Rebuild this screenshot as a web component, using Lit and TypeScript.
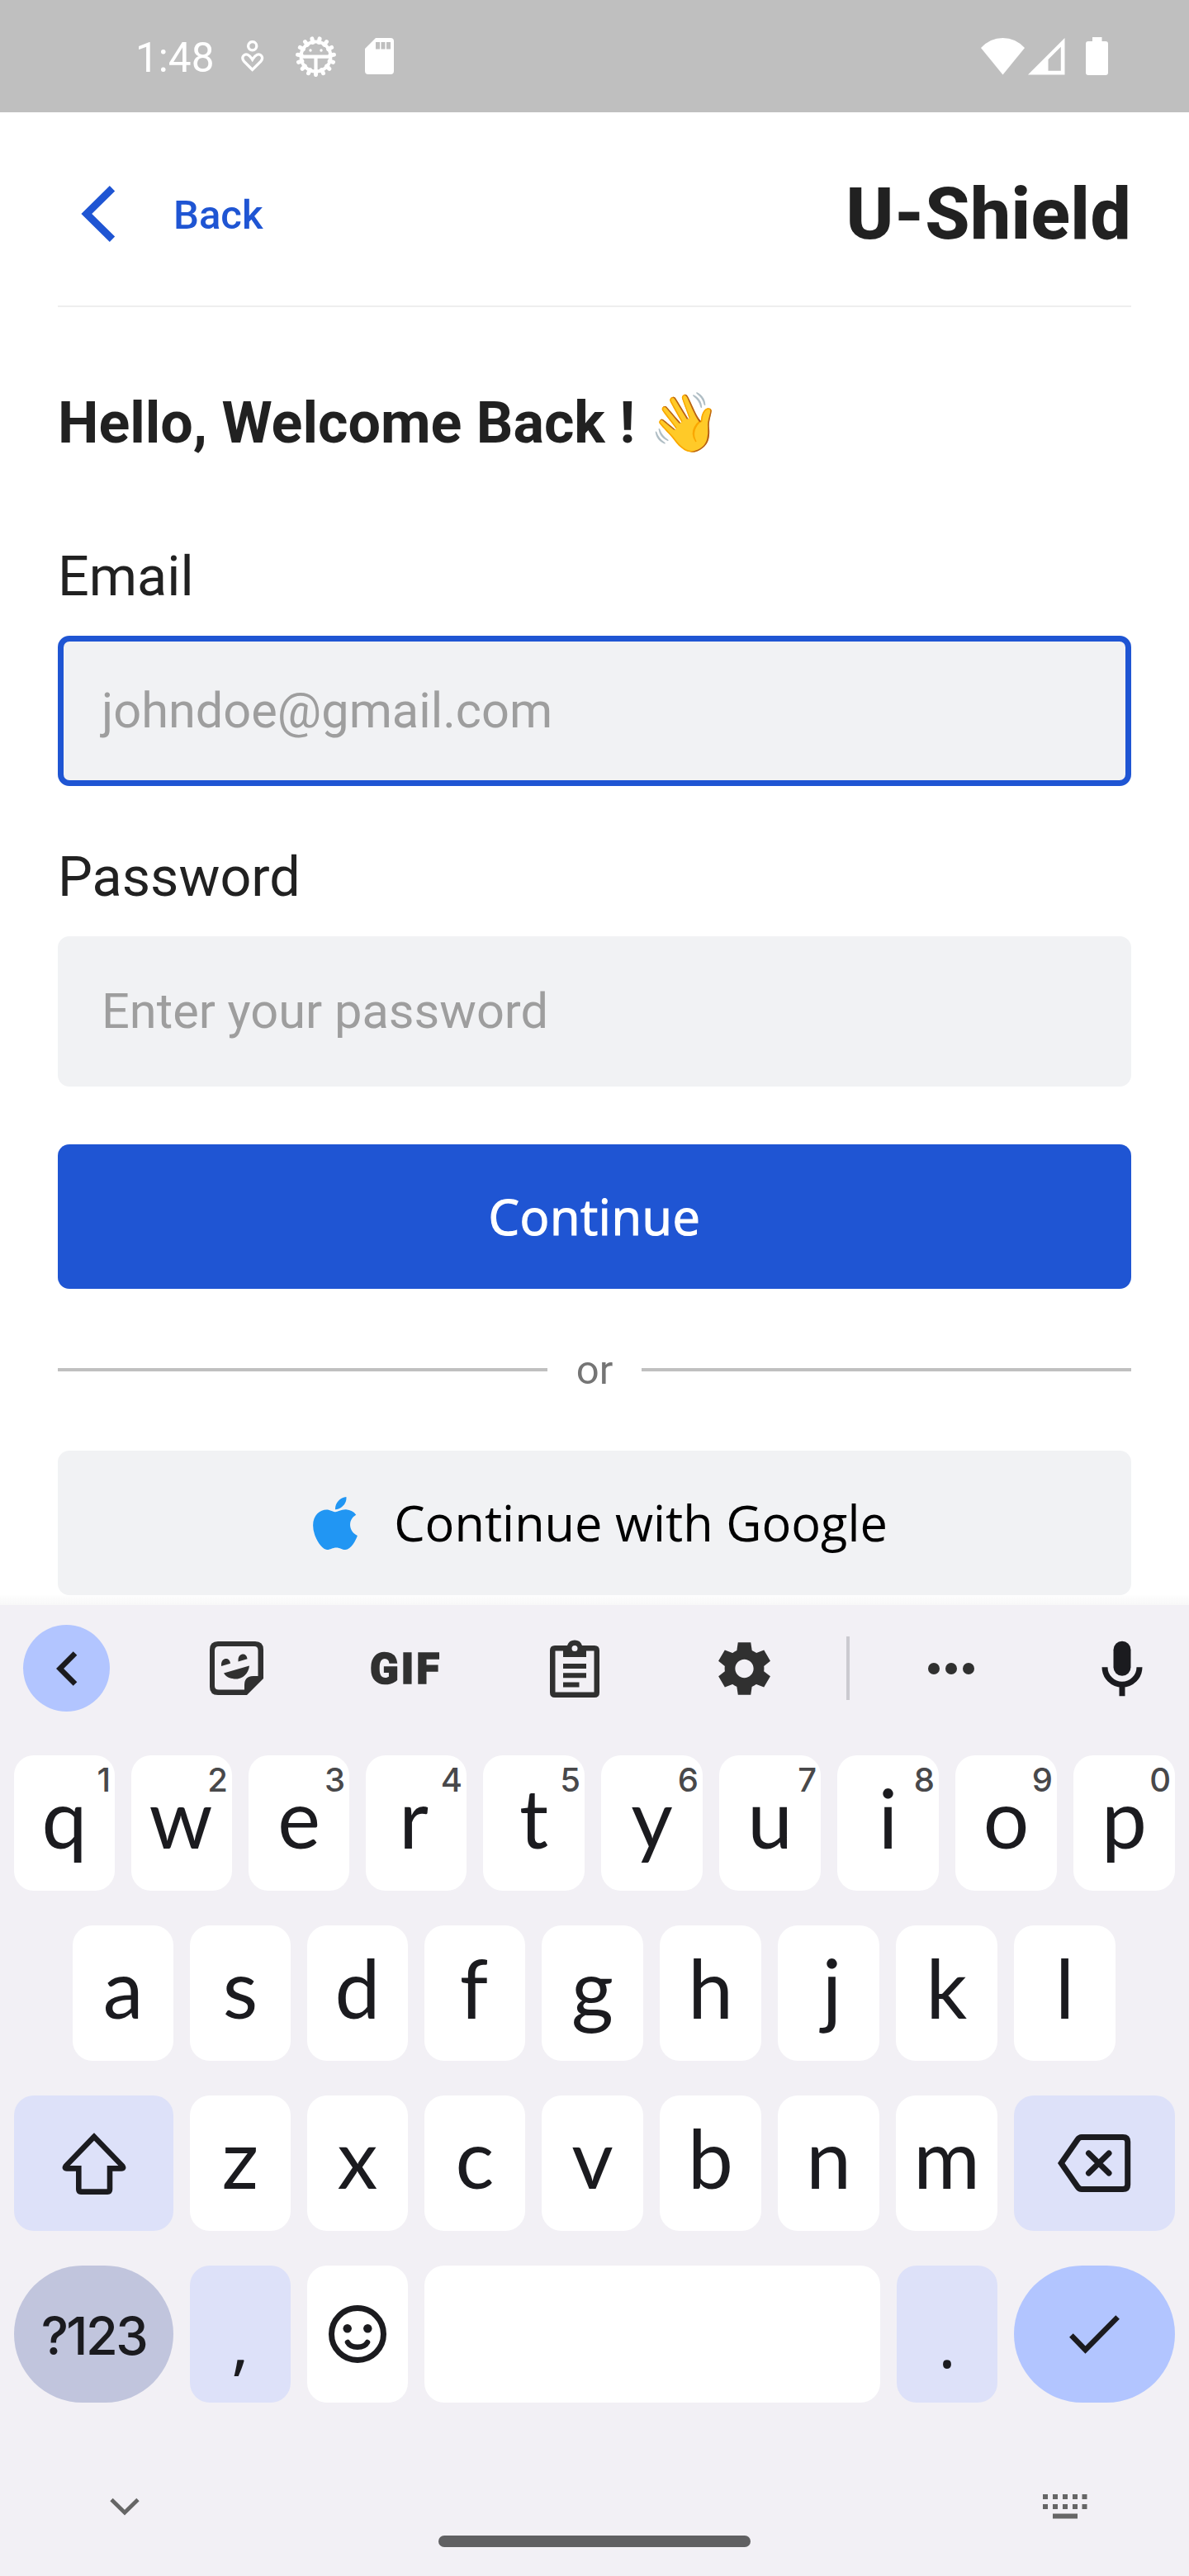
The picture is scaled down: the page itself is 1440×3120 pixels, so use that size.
import { LitElement, html, css, svg, nothing } from "lit";
import { customElement, property } from "lit/decorators.js";

const GEAR_TEETH = Array.from({ length: 15 }, (_, i) => (i * 360) / 15);

const NUDGE: Record<string, number> = { r: -3, f: -1, j: 4, w: -1 };

@customElement("status-bar")
class StatusBar extends LitElement {
  static styles = css`
    :host { display: block; }
    .bar { box-sizing: border-box; height: 136px; background: #bfbfbf; display: flex; align-items: center; padding: 0 98px 0 164px; color: #fff; }
    .time { font: 400 49.5px/60px Roboto, sans-serif; width: 128px; padding-top: 4px; }
    svg { display: block; flex: none; }
    .bug { margin-left: 38px; }
    .card { margin-left: 35px; }
    .wifi { margin-left: auto; }
    .signal { margin-left: 4px; }
    .battery { margin-left: 25px; }
  `;
  render() {
    return html`<div class="bar">
      <span class="time">1:48</span>
      <svg width="28" height="38" viewBox="0 0 28 38" fill="none" stroke="#fff" stroke-width="3.3">
        <circle cx="13.7" cy="6.7" r="5.1" />
        <path d="M13.7 35.5L3.6 25.3C-.6 20.5 3.6 15.8 8 17.3C10.8 18.3 12.2 21 13.7 23.2C15.2 21 16.6 18.3 19.4 17.3C23.8 15.8 28 20.5 23.8 25.3Z" />
      </svg>
      <svg class="bug" width="49" height="49" viewBox="0 0 49 49">
        ${GEAR_TEETH.map((a) => svg`<line x1="24.5" y1="42" x2="24.5" y2="46.6" stroke="#fff" stroke-width="5" stroke-linecap="round" transform="rotate(${a} 24.5 24.5)" />`)}
        <circle cx="24.5" cy="24.5" r="18" fill="none" stroke="#fff" stroke-width="4" />
        <path d="M7 24.7H42M24.5 25V42" stroke="#fff" stroke-width="4.2" />
        <circle cx="18" cy="17" r="1.7" fill="#fff" /><circle cx="31" cy="17" r="1.7" fill="#fff" />
      </svg>
      <svg class="card" width="35" height="44" viewBox="0 0 35 44">
        <path d="M13 0H31Q35 0 35 4V40Q35 44 31 44H4Q0 44 0 40V13Z" fill="#fff" />
        <path d="M13 5h5v8.5h-5zM19.5 5h5v8.5h-5zM26 5h5v8.5h-5z" fill="#bfbfbf" />
      </svg>
      <svg class="wifi" width="53" height="45" viewBox="0 0 53 45" fill="#fff"><path d="M26.5 44.5L0 12Q11 0 26.5 0Q42 0 53 12Z" /></svg>
      <svg class="signal" width="45" height="45" viewBox="0 0 45 45" fill="#fff" fill-rule="evenodd"><path d="M0 44.5L44.5 0V44.5ZM24.5 26V39.8H39.8V10.8Z" /></svg>
      <svg class="battery" width="27" height="46" viewBox="0 0 27 46" fill="#fff"><path d="M8 0H19.5V5H24Q27 5 27 8V43Q27 46 24 46H3Q0 46 0 43V8Q0 5 3 5H8Z" /></svg>
    </div>`;
  }
}

@customElement("login-form")
class LoginForm extends LitElement {
  static styles = css`
    :host { display: block; font-family: Roboto, sans-serif; color: #212121; }
    .page { box-sizing: border-box; height: 1808px; padding: 0 70px; background: linear-gradient(#fff 0 1796px, #fdfdfd 1797px, #f8f8f8 1808px); }
    svg { display: block; flex: none; }
    .header { box-sizing: border-box; height: 236px; border-bottom: 2px solid #eee; padding: 12px 0 0 28px; display: flex; align-items: center; }
    .back { font-size: 49px; font-weight: 500; line-height: 60px; color: #1f55d3; margin-left: 70px; padding-top: 3px; }
    .brand { margin-left: auto; font-size: 87.5px; font-weight: 800; line-height: 100px; letter-spacing: 0.4px; }
    .hello { margin: 100px 0 0; font-size: 70px; font-weight: 700; line-height: 80px; height: 80px; white-space: pre; }
    .label { font-size: 66.5px; line-height: 80px; margin-top: 106px; }
    .field + .label { margin-top: 70px; }
    .field { box-sizing: border-box; height: 182px; margin-top: 32px; border: 7px solid #f1f2f4; border-radius: 14px; background: #f1f2f4; color: #9e9e9e; font-size: 59.5px; line-height: 168px; padding-left: 46px; }
    .field.focused { border-color: #1f55d3; }
    .button { box-sizing: border-box; height: 175px; margin-top: 70px; border-radius: 14px; background: #1f55d3; color: #fff; font: 400 59.5px/172px "Open Sans", sans-serif; display: flex; justify-content: center; align-items: center; }
    .button span { padding-bottom: 2px; }
    .button .strong { letter-spacing: 0.6px; -webkit-text-stroke: 1.2px currentColor; }
    .or { display: flex; align-items: center; gap: 35px; height: 60px; margin-top: 68px; color: #757575; font-size: 49px; line-height: 58px; }
    .or span { padding-top: 2px; }
    .rule { flex: 1; height: 4px; background: #c0c0c0; }
    .button.google { background: #f1f2f4; color: #000; margin-top: 68px; gap: 44px; padding-left: 14px; }
  `;
  render() {
    return html`<div class="page">
      <div class="header">
        <svg width="42" height="68" viewBox="0 0 42 68" fill="none" stroke="#1f55d3" stroke-width="9"><path d="M38 3.2L6.8 34L38 64.8" /></svg>
        <span class="back">Back</span>
        <span class="brand">U-Shield</span>
      </div>
      <h1 class="hello">Hello, Welcome Back ! 👋</h1>
      <div class="label">Email</div>
      <div class="field focused">johndoe@gmail.com</div>
      <div class="label">Password</div>
      <div class="field">Enter your password</div>
      <div class="button"><span class="strong">Continue</span></div>
      <div class="or"><div class="rule"></div><span>or</span><div class="rule"></div></div>
      <div class="button google">
        <svg width="54" height="64" viewBox="4 32 376.5 448" fill="#2196f3"><path d="M318.7 268.7c-.2-36.7 16.4-64.4 50-84.8-18.8-26.9-47.2-41.7-84.7-44.6-35.5-2.8-74.3 20.7-88.5 20.7-15 0-49.4-19.7-76.4-19.7C63.3 141.2 4 184.8 4 273.5q0 39.3 14.4 81.2c12.8 36.7 59 126.7 107.2 125.2 25.2-.6 43-17.9 75.8-17.9 31.8 0 48.3 17.9 76.4 17.9 48.6-.7 90.4-82.5 102.6-119.3-65.2-30.7-61.7-90-61.7-91.9zm-56.6-164.2c27.3-32.4 24.8-61.9 24-72.5-24.1 1.4-52 16.4-67.9 34.9-17.5 19.8-27.8 44.3-25.6 71.9 26.1 2 49.9-11.4 69.5-34.3z" /></svg>
        <span>Continue with Google</span>
      </div>
    </div>`;
  }
}

@customElement("letter-key")
class LetterKey extends LitElement {
  @property() label = "";
  @property() hint = "";
  static styles = css`
    :host { display: block; min-width: 0; }
    .key { position: relative; height: 164px; border-radius: 24px; background: #fff; color: #1b1b1f; text-align: center; font: 400 98px/150px Lato, sans-serif; }
    .hint { position: absolute; top: 10px; right: 5px; text-indent: 0; font: 500 40px/40px Inter, sans-serif; color: #48484a; }
  `;
  render() {
    const shift = 2 * (NUDGE[this.label] ?? 0);
    return html`<div class="key" style=${`text-indent:${shift}px`}>${this.label}${this.hint ? html`<span class="hint">${this.hint}</span>` : nothing}</div>`;
  }
}

@customElement("soft-keyboard")
class SoftKeyboard extends LitElement {
  static styles = css`
    :host { display: block; }
    .board { box-sizing: border-box; height: 1176px; background: #f2f0f5; color: #1b1b1f; overflow: hidden; }
    svg { display: block; flex: none; }
    .tools { display: flex; align-items: center; height: 153px; padding-left: 28px; margin-bottom: 29px; }
    .collapse { width: 105px; height: 105px; border-radius: 50%; background: #b2c5ff; display: grid; place-items: center; }
    .sticker { margin-left: 121px; }
    .gif { margin-left: 129px; width: 85px; font: 900 51px/60px Roboto, sans-serif; color: #303030; letter-spacing: 3px; white-space: nowrap; padding-top: 2px; -webkit-text-stroke: 1.5px #303030; }
    .clip { margin-left: 133px; }
    .gear { margin-left: 144px; }
    .sep { width: 4px; height: 77px; background: #cbcad0; margin-left: 92px; }
    .dots { margin-left: 95px; }
    .mic { margin-left: 154px; }
    .row { display: grid; gap: 20px; padding: 0 17px; margin-bottom: 42px; }
    .r1 { grid-template-columns: repeat(4, 122px) repeat(6, 123px); }
    .r2 { grid-template-columns: repeat(4, 122px) repeat(5, 123px); padding: 0 88px; }
    .r3 { grid-template-columns: 193px repeat(3, 122px) repeat(4, 123px) 195px; }
    .r4 { grid-template-columns: 193px 122px 122px 1fr 122px 195px; margin-bottom: 0; }
    .key { border-radius: 24px; background: #fff; display: flex; justify-content: center; align-items: center; height: 164px; }
    .r4 .key { height: 166px; }
    .soft { background: #dde1f9; }
    .r4 .pill { border-radius: 83px; }
    .symbols { background: #c1c5dd; font: 500 63px/100px Inter, sans-serif; letter-spacing: -2.5px; padding: 4px 0 0; box-sizing: border-box; }
    .enter { background: #b2c5ff; }
    .punct { font: 400 80px/100px "Noto Sans", sans-serif; padding-top: 20px; box-sizing: border-box; }
    .nav { display: flex; justify-content: space-between; align-items: center; height: 36px; padding: 0 123px 0 133px; margin-top: 108px; }
    .home { width: 378px; height: 14px; border-radius: 7px; background: #606062; margin: 17px auto 0; }
  `;
  render() {
    const keys = (s: string, hints = "") => [...s].map((c, i) => html`<letter-key .label=${c} .hint=${hints[i] ?? ""}></letter-key>`);
    return html`<div class="board">
      <div class="tools">
        <div class="collapse"><svg width="26" height="42" viewBox="0 0 26 42" fill="none" stroke="#1b1b1f" stroke-width="6.5"><path d="M23 2.5L4.6 21L23 39.5" /></svg></div>
        <svg class="sticker" width="65" height="65" viewBox="0 0 65 65" fill="#303030">
          <path fill-rule="evenodd" d="M10 0H55Q65 0 65 10V45L45 65H10Q0 65 0 55V10Q0 0 10 0ZM11 6Q6 6 6 11V54Q6 58.5 11 58.5H42V53Q42 42 53 42H58.5V11Q58.5 6 54 6Z" />
          <path d="M14 30V28C14 19 24.5 18.5 25 26.7ZM34.5 24.5V22.5C34.5 13.5 45 13 45.5 21.2ZM17 38.5L48 29.5C47 39 40 45.5 32 45.5C25 45.5 19.5 43 17 38.5Z" />
        </svg>
        <span class="gif">GIF</span>
        <svg class="clip" width="60" height="70" viewBox="0 0 60 70" fill="#303030">
          <path fill-rule="evenodd" d="M6 7H21A9.5 9.5 0 0 1 39 7H54Q60 7 60 13V64Q60 70 54 70H6Q0 70 0 64V13Q0 7 6 7ZM6.5 13.5V63.5H53.5V13.5H44V21H16V13.5ZM30 7A3.5 3.5 0 1 0 30 14A3.5 3.5 0 1 0 30 7Z" />
          <path d="M16 29H44V35H16ZM16 40.3H44V46.3H16ZM16 51.6H35.5V57.6H16Z" />
        </svg>
        <svg class="gear" width="63" height="64" viewBox="2.1 2 19.8 20" fill="#303030"><path d="M19.44 12.99l-.01.02c.04-.33.08-.67.08-1.01 0-.34-.03-.66-.07-.99l.01.02 2.44-1.92-2.43-4.22-2.87 1.16.01.01c-.52-.4-1.09-.74-1.71-1h.01L14.44 2H9.57l-.44 3.07h.01c-.62.26-1.19.6-1.71 1l.01-.01-2.88-1.17-2.44 4.22 2.44 1.92.01-.02c-.04.33-.07.65-.07.99 0 .34.03.68.08 1.01l-.01-.02-2.1 1.65-.33.26 2.43 4.2 2.88-1.15-.02-.04c.53.41 1.1.75 1.73 1.01h-.03L9.58 22h4.85s.03-.18.06-.42l.38-2.65h-.01c.62-.26 1.2-.6 1.73-1.01l-.02.04 2.88 1.15 2.43-4.2s-.14-.12-.33-.26l-2.11-1.66zM12 15.5c-1.93 0-3.5-1.57-3.5-3.5s1.57-3.5 3.5-3.5 3.5 1.57 3.5 3.5-1.57 3.5-3.5 3.5z" /></svg>
        <div class="sep"></div>
        <svg class="dots" width="56" height="14" viewBox="0 0 56 14" fill="#303030"><circle cx="7" cy="7" r="7" /><circle cx="28" cy="7" r="7" /><circle cx="49" cy="7" r="7" /></svg>
        <svg class="mic" width="50" height="68" viewBox="4.85 1.8 14.3 19.4"><rect x="9" y="2" width="6" height="12" rx="3" fill="#1b1b1f" /><path d="M6 11a6 6 0 0 0 12 0M12 17v4" fill="none" stroke="#1b1b1f" stroke-width="2" /></svg>
      </div>
      <div class="row r1">${keys("qwertyuiop", "1234567890")}</div>
      <div class="row r2">${keys("asdfghjkl")}</div>
      <div class="row r3">
        <div class="key soft"><svg width="78" height="75" viewBox="0 0 78 75" fill="none" stroke="#1b1b1f" stroke-width="6.6"><path d="M39 4.9L4.6 40.5Q2.6 43.4 6 43.4H20.3V68.5Q20.3 71.6 23 71.6H55.3Q58 71.6 58 68.5V43.4H72Q75.4 43.4 73.4 40.5Z" /></svg></div>
        ${keys("zxcvbnm")}
        <div class="key soft"><svg width="89" height="70" viewBox="0 0 89 70" fill="none" stroke="#1b1b1f" stroke-width="7"><path d="M4.2 35L24 6.5Q26 3.5 29 3.5H79Q84.7 3.5 84.7 9V61Q84.7 66.5 79 66.5H29Q26 66.5 24 63.5Z" /><path d="M37.5 23L62 47M62 23L37.5 47" stroke-linecap="round" /></svg></div>
      </div>
      <div class="row r4">
        <div class="key pill symbols">?123</div>
        <div class="key soft punct">,</div>
        <div class="key"><svg width="70" height="70" viewBox="-35 -35 70 70"><circle r="31.5" fill="none" stroke="#1b1b1f" stroke-width="7" /><circle cx="-12.3" cy="-6.8" r="5.2" fill="#1b1b1f" /><circle cx="12.3" cy="-6.8" r="5.2" fill="#1b1b1f" /><path d="M-12 10C-8 17.5 8 17.5 12 10" fill="none" stroke="#1b1b1f" stroke-width="6.5" stroke-linecap="round" /></svg></div>
        <div class="key"></div>
        <div class="key soft punct">.</div>
        <div class="key pill enter"><svg width="61" height="47" viewBox="0 0 61 47" fill="none" stroke="#1b1b1f" stroke-width="6.5"><path d="M2.4 24.5L19.5 42L58.6 2.5" /></svg></div>
      </div>
      <div class="nav">
        <svg width="36" height="22" viewBox="0 0 36 22" fill="none" stroke="#666" stroke-width="4.8"><path d="M2 2.5L18 18.2L34 2.5" /></svg>
        <svg width="54" height="30" viewBox="0 0 54 30" fill="#666"><path d="M0 0h6v6H0zM12 0h6v6h-6zM24 0h6v6h-6zM36 0h6v6h-6zM47.5 0h6v6h-6zM0 12h6v6H0zM12 12h6v6h-6zM24 12h6v6h-6zM36 12h6v6h-6zM47.5 12h6v6h-6zM12 23.5h30v6H12z" /></svg>
      </div>
      <div class="home"></div>
    </div>`;
  }
}

@customElement("app-root")
class AppRoot extends LitElement {
  static styles = css`
    :host { display: block; }
    .screen { display: flex; flex-direction: column; width: 1440px; height: 3120px; background: #fff; overflow: hidden; }
  `;
  render() {
    return html`<div class="screen"><status-bar></status-bar><login-form></login-form><soft-keyboard></soft-keyboard></div>`;
  }
}
